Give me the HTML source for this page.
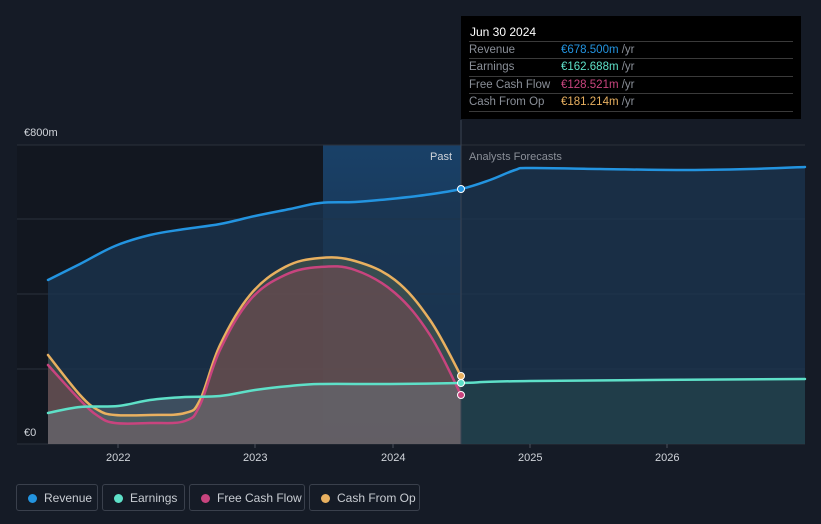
<!DOCTYPE html>
<html><head><meta charset="utf-8"><style>
body{margin:0;width:821px;height:524px;background:#151b26;font-family:"Liberation Sans",sans-serif;overflow:hidden;position:relative}
.tt{position:absolute;left:461px;top:16px;width:340px;height:103px;background:#000;color:#fff}
.tt .h{font-size:12px;position:absolute;left:9px;top:9px}
.row{position:absolute;left:8px;width:324px;border-top:1px solid #3a3a3a;height:17px;font-size:11.5px;line-height:17px;color:#8a8f98}
.row span.v{position:absolute;left:92px}
.leg{position:absolute;top:484px;height:27px;border:1px solid #3a404c;border-radius:3px;color:#c8ccd2;font-size:12px;line-height:27px;box-sizing:border-box;padding-left:27px}
.leg i{position:absolute;left:11px;top:9px;width:9px;height:9px;border-radius:50%}
</style></head><body>
<svg id="s" width="821" height="524" style="position:absolute;left:0;top:0">
<defs><linearGradient id="g" x1="0" y1="0" x2="0" y2="1"><stop offset="0" stop-color="#1a4a78" stop-opacity=".8"/><stop offset="1" stop-color="#1a3a5e" stop-opacity=".5"/></linearGradient></defs>
<rect x="17" y="145" width="306" height="299" fill="#121720"/>
<rect x="323" y="145" width="138" height="299" fill="url(#g)"/>
<g stroke="#2a303b" stroke-width="1"><line x1="17" y1="145" x2="805" y2="145"/><line x1="17" y1="219" x2="805" y2="219"/><line x1="17" y1="294" x2="805" y2="294"/><line x1="17" y1="369" x2="805" y2="369"/><line x1="17" y1="444" x2="805" y2="444"/></g>
<g id="areas"></g>
<g id="lines" fill="none" stroke-width="2.5" stroke-linejoin="round" stroke-linecap="round"></g>
<line x1="461" y1="120" x2="461" y2="444" stroke="#3a4454"/>
<circle cx="461" cy="189" r="3.5" fill="#2394e0" stroke="#fff"/>
<circle cx="461" cy="376" r="3.5" fill="#e8b060" stroke="#fff"/>
<circle cx="461" cy="383" r="3.5" fill="#5ee0c8" stroke="#fff"/>
<circle cx="461" cy="395" r="3.5" fill="#c8447e" stroke="#fff"/>
<g stroke="#4a505c"><line x1="118" y1="444" x2="118" y2="448"/><line x1="255" y1="444" x2="255" y2="448"/><line x1="393" y1="444" x2="393" y2="448"/><line x1="530" y1="444" x2="530" y2="448"/><line x1="667" y1="444" x2="667" y2="448"/></g>
<g font-family="Liberation Sans" font-size="11" fill="#d0d4da">
<text x="24" y="136">€800m</text><text x="24" y="436">€0</text>
<text x="430" y="160">Past</text><text x="469" y="160" fill="#8a8f98">Analysts Forecasts</text>
<text x="106" y="461">2022</text><text x="243" y="461">2023</text><text x="381" y="461">2024</text><text x="518" y="461">2025</text><text x="655" y="461">2026</text>
</g>
</svg>
<div class="tt"><div class="h">Jun 30 2024</div>
<div class="row" style="top:25px">Revenue<span class="v"><span style="color:#2394e0">€678.500m</span> /yr</span></div>
<div class="row" style="top:42px">Earnings<span class="v"><span style="color:#5ee0c8">€162.688m</span> /yr</span></div>
<div class="row" style="top:60px">Free Cash Flow<span class="v"><span style="color:#c8447e">€128.521m</span> /yr</span></div>
<div class="row" style="top:77px">Cash From Op<span class="v"><span style="color:#e8b060">€181.214m</span> /yr</span></div>
<div class="row" style="top:95px;height:0"></div>
</div>
<div class="leg" style="left:16px;width:82px"><i style="background:#2394e0"></i>Revenue</div>
<div class="leg" style="left:102px;width:83px"><i style="background:#5ee0c8"></i>Earnings</div>
<div class="leg" style="left:189px;width:116px"><i style="background:#c8447e"></i>Free Cash Flow</div>
<div class="leg" style="left:309px;width:111px"><i style="background:#e8b060"></i>Cash From Op</div>
<script>
function sm(p){var d="M"+p[0][0]+","+p[0][1];for(var i=0;i<p.length-1;i++){var a=p[i-1]||p[i],b=p[i],c=p[i+1],e=p[i+2]||c;var t=0.18;d+=" C"+(b[0]+(c[0]-a[0])*t)+","+(b[1]+(c[1]-a[1])*t)+" "+(c[0]-(e[0]-b[0])*t)+","+(c[1]-(e[1]-b[1])*t)+" "+c[0]+","+c[1];}return d;}
var rev=[[48,280],[80,264],[115,246],[150,235],[185,229],[220,224],[255,216],[290,209],[320,203],[355,202],[390,199],[425,195],[461,189],[490,180],[515,170],[530,168],[600,169],[680,170],[750,169],[805,167]];
var cfo=[[48,355],[80,395],[98,410],[115,415],[150,415],[185,413],[200,400],[220,345],[250,295],[285,267],[320,258],[355,261],[395,280],[430,320],[461,376]];
var fcf=[[48,365],[80,400],[98,416],[115,423],[150,423],[185,421],[200,405],[220,350],[250,300],[285,275],[320,267],[355,270],[395,293],[430,335],[461,395]];
var ern=[[48,413],[80,407],[118,406],[150,400],[185,397],[220,396],[255,390],[290,386],[320,384],[390,384],[461,383]];
var ernF=[[461,383],[530,381],[805,379]];
var A=document.getElementById("areas"),L=document.getElementById("lines"),ns="http://www.w3.org/2000/svg";
function path(par,d,at){var e=document.createElementNS(ns,"path");e.setAttribute("d",d);for(var k in at)e.setAttribute(k,at[k]);par.appendChild(e);}
function close(p){return " L"+p[p.length-1][0]+",444 L"+p[0][0]+",444 Z";}
path(A,sm(rev)+close(rev),{fill:"#1b3550",opacity:".75"});
path(A,sm(cfo)+close(cfo),{fill:"#5a6a50",opacity:".45"});
path(A,sm(fcf)+close(fcf),{fill:"#7a4a50",opacity:".55"});
path(A,sm(ern)+close(ern),{fill:"#6a7880",opacity:".45"});
path(A,sm(ernF)+close(ernF),{fill:"#24454c",opacity:".7"});
path(L,sm(rev),{stroke:"#2394e0"});
path(L,sm(cfo),{stroke:"#e8b060"});
path(L,sm(fcf),{stroke:"#c8447e"});
path(L,sm(ern.concat(ernF.slice(1))),{stroke:"#5ee0c8"});
</script>
</body></html>
